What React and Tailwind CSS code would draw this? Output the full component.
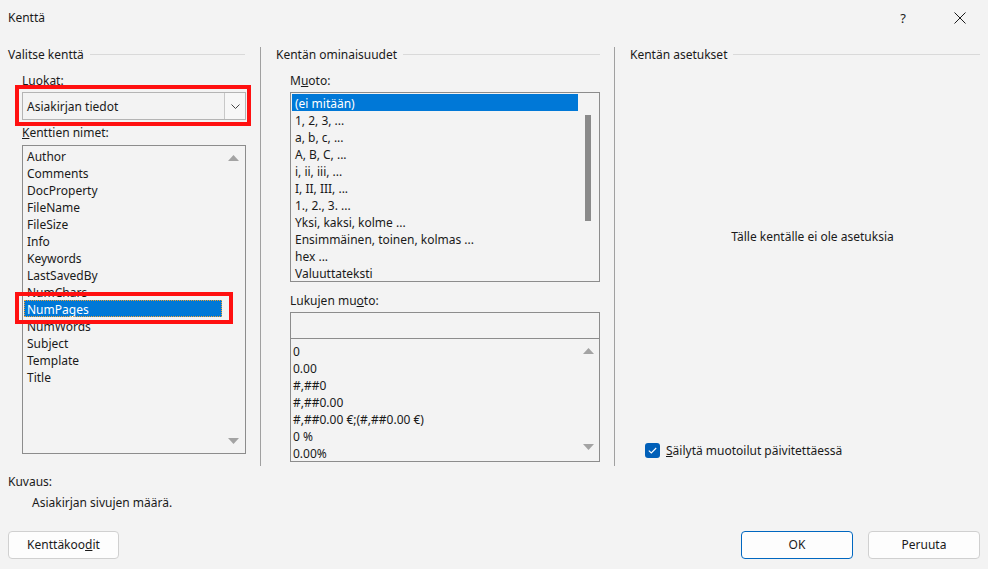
import React from 'react';

const fieldNames = [
  'Author', 'Comments', 'DocProperty', 'FileName', 'FileSize', 'Info', 'Keywords',
  'LastSavedBy', 'NumChars', 'NumPages', 'NumWords', 'Subject', 'Template', 'Title',
];

const formats = [
  '(ei mitään)', '1, 2, 3, ...', 'a, b, c, ...', 'A, B, C, ...', 'i, ii, iii, ...', 'I, II, III, ...',
  '1., 2., 3. ...', 'Yksi, kaksi, kolme ...', 'Ensimmäinen, toinen, kolmas ...', 'hex ...', 'Valuuttateksti',
];

const numberFormats = ['0', '0.00', '#,##0', '#,##0.00', '#,##0.00 €;(#,##0.00 €)', '0 %', '0.00%'];

function ArrowUp() {
  return (
    <svg width="11" height="6" viewBox="0 0 11 6"><path d="M5.5 0 L11 6 L0 6 Z" fill="#a3a3a3" /></svg>
  );
}

function ArrowDown() {
  return (
    <svg width="11" height="6" viewBox="0 0 11 6"><path d="M0 0 L11 0 L5.5 6 Z" fill="#a3a3a3" /></svg>
  );
}

function GroupHeader({ title, className }) {
  return (
    <div className={`flex items-center h-4 ${className}`}>
      <span className="whitespace-nowrap h-4 leading-[18px]">{title}</span>
      <div className="flex-1 h-px bg-[#d9d9d9] ml-[6px]" />
    </div>
  );
}

function Row({ text, selected, focus }) {
  return (
    <div
      className={`h-[17px] leading-[19px] pl-[3px] whitespace-nowrap ${
        selected ? 'bg-[#0078d7] text-white' : ''
      } ${focus ? 'outline-1 outline-dotted outline-[#f0a030] -outline-offset-1' : ''}`}
    >
      {text}
    </div>
  );
}

export default function App() {
  return (
    <div className="relative w-[988px] h-[569px] overflow-hidden bg-[#f3f3f3] text-[#1a1a1a] text-[12px] leading-[18px] font-['Segoe_UI','Noto_Sans',sans-serif]">
      {/* title bar */}
      <div className="h-[34px] flex items-center pl-2 pt-[2px]">
        <span>Kenttä</span>
        <div className="ml-auto flex items-center h-full pr-[18px]">
          <span className="w-[20px] text-center text-[13px]">?</span>
          <div className="ml-[37px] w-[20px] flex justify-center">
            <svg width="12" height="12" viewBox="0 0 12 12">
              <path d="M0.5 0.5 L11.5 11.5 M11.5 0.5 L0.5 11.5" stroke="#1a1a1a" strokeWidth="1" />
            </svg>
          </div>
        </div>
      </div>

      {/* three group columns */}
      <div className="flex h-[432px] pl-2">
        {/* Valitse kenttä */}
        <div className="w-[252px] pt-3">
          <GroupHeader title="Valitse kenttä" className="pr-[15px]" />
          <div className="pl-[14px] pr-[14px]">
            <div className="mt-[10px] h-4"><span className="underline">L</span>uokat:</div>
            <div className="mt-1 h-[28px] border border-[#b4b4b4] flex items-stretch">
              <div className="flex-1 pl-[4px] pt-px flex items-center">Asiakirjan tiedot</div>
              <div className="w-[21px] border-l border-[#c8c8c8] bg-[#f7f7f7] flex items-center justify-center">
                <svg width="9" height="5" viewBox="0 0 9 5">
                  <path d="M0.5 0.5 L4.5 4.5 L8.5 0.5" fill="none" stroke="#444" strokeWidth="1" />
                </svg>
              </div>
            </div>
            <div className="mt-1 h-4"><span className="underline">K</span>enttien nimet:</div>
            <div className="mt-[5px] h-[309px] border border-[#8c8c8c] flex">
              <div className="w-[199px] pl-px pt-px">
                {fieldNames.map((n) => (
                  <Row key={n} text={n} selected={n === 'NumPages'} focus={n === 'NumPages'} />
                ))}
              </div>
              <div className="flex-1 flex flex-col items-center justify-between pt-[9px] pb-[9px]">
                <ArrowUp />
                <ArrowDown />
              </div>
            </div>
          </div>
        </div>

        <div className="w-px mt-[13px] bg-[#a0a0a0]" />

        {/* Kentän ominaisuudet */}
        <div className="w-[353px] pt-3">
          <GroupHeader title="Kentän ominaisuudet" className="pl-[15px] pr-[14px]" />
          <div className="pl-[29px] pr-[14px]">
            <div className="mt-[10px] h-4">M<span className="underline">u</span>oto:</div>
            <div className="mt-1 h-[190px] border border-[#8c8c8c] flex">
              <div className="w-[287px] pl-px pt-px">
                {formats.map((f, i) => (
                  <Row key={f} text={f} selected={i === 0} />
                ))}
              </div>
              <div className="flex-1 pt-[22px] pl-[7px]">
                <div className="w-[6px] h-[106px] bg-[#8a8a8a]" />
              </div>
            </div>
            <div className="mt-[10px] h-4">Lukujen mu<span className="underline">o</span>to:</div>
            <div className="mt-1 h-[27px] border border-[#8c8c8c]" />
            <div className="h-[123px] border border-t-0 border-[#8c8c8c] flex">
              <div className="flex-1 pt-[3px]">
                {numberFormats.map((f) => (
                  <div key={f} className="h-[17px] leading-[19px] pl-[2px] whitespace-nowrap">{f}</div>
                ))}
              </div>
              <div className="w-[22px] flex flex-col items-center justify-between pt-[9px] pb-[11px]">
                <ArrowUp />
                <ArrowDown />
              </div>
            </div>
          </div>
        </div>

        <div className="w-px mt-[13px] bg-[#a0a0a0]" />

        {/* Kentän asetukset */}
        <div className="flex-1 pt-3">
          <GroupHeader title="Kentän asetukset" className="pl-[15px] pr-2" />
          <div className="pl-[30px] pr-2">
            <div className="mt-[166px] h-4 text-center">Tälle kentälle ei ole asetuksia</div>
            <div className="mt-[198px] h-4 flex items-center">
              <div className="w-[15px] h-[15px] rounded-[3px] bg-[#005fb8] flex items-center justify-center">
                <svg width="9" height="7" viewBox="0 0 9 7">
                  <path d="M0.8 3.6 L3.3 6 L8.2 1" fill="none" stroke="#fff" strokeWidth="1.1" />
                </svg>
              </div>
              <span className="ml-[6px] h-4"><span className="underline">S</span>äilytä muotoilut päivitettäessä</span>
            </div>
          </div>
        </div>
      </div>

      {/* description and buttons */}
      <div className="pl-2 pt-[7px]">
        <div className="h-4">Kuvaus:</div>
        <div className="h-4 mt-[5px] pl-6">Asiakirjan sivujen määrä.</div>
      </div>
      <div className="flex pl-2 pr-2 mt-[21px] leading-4">
        <button className="w-[111px] h-[28px] rounded-[4px] border border-[#d0d0d0] bg-[#fdfdfd]">
          Kenttäkoo<span className="underline">d</span>it
        </button>
        <button className="ml-auto w-[112px] h-[28px] rounded-[4px] border-[1.5px] border-[#0067c0] bg-[#fdfdfd]">
          OK
        </button>
        <button className="ml-[15px] w-[112px] h-[28px] rounded-[4px] border border-[#d0d0d0] bg-[#fdfdfd]">
          Peruuta
        </button>
      </div>

      {/* red highlight frames */}
      <div className="absolute left-[15px] top-[85px] w-[236px] h-[41px] border-4 border-[#ff1010]" />
      <div className="absolute left-[15px] top-[292px] w-[218px] h-[32px] border-4 border-[#ff1010]" />
    </div>
  );
}
